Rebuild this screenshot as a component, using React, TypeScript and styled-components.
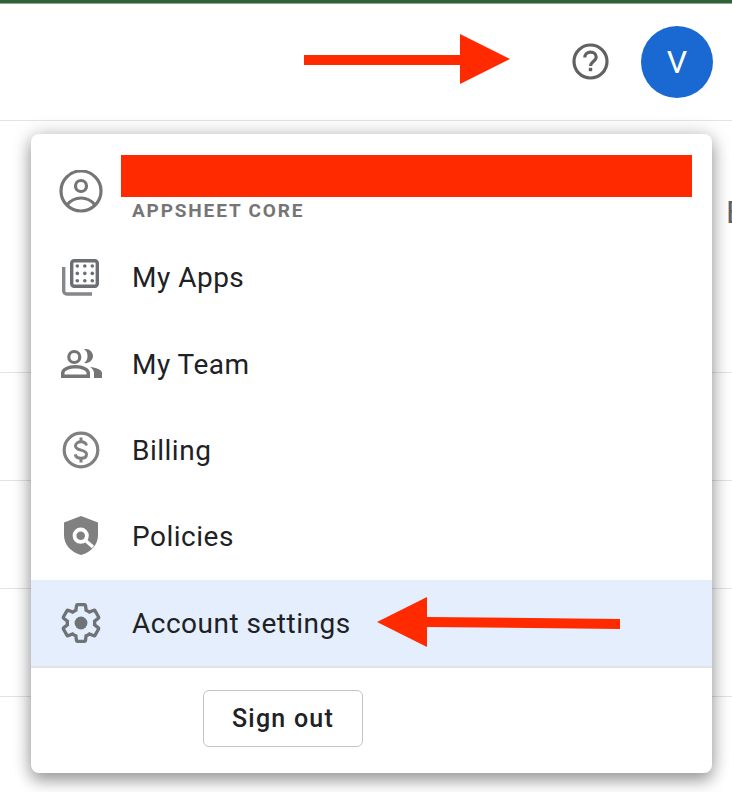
import React from "react";
import styled, { createGlobalStyle } from "styled-components";

const GlobalStyle = createGlobalStyle`
  html, body {
    margin: 0;
    padding: 0;
    background: #fff;
    overflow: hidden;
  }
  body {
    font-family: Roboto, "Liberation Sans", sans-serif;
  }
`;

const Page = styled.div`
  position: relative;
  width: 732px;
  height: 792px;
  overflow: hidden;
  background: #fff;
`;

const TopStrip = styled.div`
  height: 4px;
  background: #2f6236;
  border-bottom: 1px solid #8fa893;
  box-sizing: border-box;
`;

const TopBar = styled.header`
  height: 117px;
  box-sizing: border-box;
  display: flex;
  align-items: center;
  justify-content: flex-end;
  gap: 32px;
  padding-right: 19px;
  border-bottom: 1px solid #e3e3e3;
`;

const HelpButton = styled.div`
  width: 37px;
  height: 37px;
  margin-bottom: 2px;
  display: flex;
  align-items: center;
  justify-content: center;
`;

const Avatar = styled.div`
  width: 72px;
  height: 72px;
  border-radius: 50%;
  background: #1a69d3;
  color: #fff;
  font-size: 32px;
  display: flex;
  align-items: center;
  justify-content: center;
`;

const Rows = styled.div`
  padding-top: 144px;
  display: flex;
  flex-direction: column;
`;

const BgRow = styled.div`
  height: 108px;
  box-sizing: border-box;
  border-bottom: 1px solid #e3e3e3;
`;

const ClippedLetter = styled.span`
  position: absolute;
  left: 726px;
  top: 196px;
  font-size: 32px;
  line-height: 32px;
  color: #5f6368;
`;

const Menu = styled.div`
  position: absolute;
  left: 31px;
  top: 134px;
  width: 681px;
  height: 639px;
  background: #fff;
  border-radius: 8px;
  box-shadow: 0 8px 16px rgba(0, 0, 0, 0.32), 0 0 20px rgba(0, 0, 0, 0.2);
  overflow: hidden;
  display: flex;
  flex-direction: column;
`;

const AccountHeader = styled.div`
  height: 100px;
  box-sizing: border-box;
  display: flex;
  padding: 21px 20px 0 90px;
  flex-direction: column;
  position: relative;
`;

const Redaction = styled.div`
  width: 571px;
  height: 42px;
  background: #ff2a00;
`;

const Plan = styled.div`
  margin: 5px 0 0 11px;
  font-size: 19px;
  line-height: 18px;
  font-weight: 700;
  letter-spacing: 1.85px;
  color: #757575;
`;

const HeaderIcon = styled.div`
  position: absolute;
  left: 28px;
  top: 36px;
  display: flex;
`;

const MenuList = styled.div`
  display: flex;
  flex-direction: column;
`;

const MenuItem = styled.div<{ $active?: boolean }>`
  height: 86.4px;
  box-sizing: border-box;
  display: flex;
  align-items: center;
  padding-left: 28px;
  gap: 29px;
  font-size: 28px;
  letter-spacing: 0.5px;
  color: #202124;
  background: ${(p) => (p.$active ? "#e4eefc" : "transparent")};
`;

const ItemIcon = styled.div`
  width: 44px;
  height: 44px;
  display: flex;
  align-items: center;
  justify-content: center;
  flex-shrink: 0;
`;

const ItemLabel = styled.span`
  margin-top: 1px;
`;

const Footer = styled.div`
  border-top: 2px solid #dfe3e8;
  padding: 22px 0 0 172px;
`;

const SignOut = styled.button`
  width: 160px;
  height: 57px;
  background: #fff;
  border: 1px solid #c4c4c4;
  border-radius: 6px;
  font-family: Roboto, "Liberation Sans", sans-serif;
  font-size: 25px;
  font-weight: 500;
  letter-spacing: 1.25px;
  color: #202124;
  padding: 0;
`;

const Annotation = styled.svg`
  position: absolute;
  left: 0;
  top: 0;
  pointer-events: none;
`;

const ICON = "#757575";

function PersonCircleIcon() {
  return (
    <svg width="44" height="44" viewBox="0 0 44 44" fill="none" stroke={ICON} strokeWidth="3.2">
      <circle cx="22" cy="21" r="20" />
      <circle cx="22" cy="16" r="5.500" />
      <path d="M8 35c4-5 9-7 14-7s10 2 14 7" />
    </svg>
  );
}

function AppsIcon() {
  const dots: React.ReactNode[] = [];
  [0, 1, 2].forEach((r) =>
    [0, 1, 2].forEach((c) =>
      dots.push(<circle key={`${r}-${c}`} cx={18.3 + c * 7.5} cy={11 + r * 7.4} r="1.8" fill="#6b6e72" />)
    )
  );
  return (
    <svg width="44" height="44" viewBox="0 0 44 44" fill="none">
      <rect x="12.700" y="5.700" width="25.600" height="25.600" rx="2.500" stroke="#6b6e72" strokeWidth="3.400" />
      <path d="M4.700 12v24a3 3 0 0 0 3 3H33" stroke="#85878b" strokeWidth="3.400" />
      {dots}
    </svg>
  );
}

function TeamIcon() {
  return (
    <svg width="44" height="44" viewBox="0 0 44 44">
      <circle cx="15.300" cy="15" r="5.500" fill="none" stroke={ICON} strokeWidth="3.200" />
      <path d="M25 7.200C30 6 34 10 34 14c0 4-4 8-9 7 2.500-1.500 3.500-4 3.500-7S27.500 8.500 25 7.200z" fill={ICON} />
      <path
        d="M2 36v-5c0-5 7-8 14.500-8S31 26 31 31v5H2zm3.500-3.500h22v-1.500c0-2.500-5.500-4.500-11-4.500s-11 2-11 4.500v1.500z"
        fill={ICON}
        fillRule="evenodd"
      />
      <path d="M31 25c6 .5 12 2.500 12 6v5h-8v-5c0-2.500-1.500-4.500-4-6z" fill={ICON} />
    </svg>
  );
}

function BillingIcon() {
  return (
    <svg width="44" height="44" viewBox="0 0 44 44" fill="none">
      <circle cx="22" cy="22" r="16.800" stroke="#808080" strokeWidth="3.200" />
      <path
        d="M27.500 17.500c-.5-2.400-2.700-3.700-5.500-3.700-3 0-5.500 1.500-5.500 4.200 0 5.500 11 2.800 11 8.200 0 2.700-2.500 4-5.500 4s-5.300-1.400-5.800-3.800"
        stroke="#808080"
        strokeWidth="3"
      />
      <path d="M22 9.500v4.500M22 30v4.500" stroke="#808080" strokeWidth="3" />
    </svg>
  );
}

function PolicyIcon() {
  return (
    <svg width="44" height="44" viewBox="0 0 44 44">
      <path d="M22 2 39 8.500V21c0 9.500-6.500 17-17 20C11.500 38 5 30.500 5 21V8.500L22 2z" fill="#808080" />
      <circle cx="21.700" cy="21.700" r="6.200" fill="none" stroke="#fff" strokeWidth="3.800" />
      <path d="M26.500 26.500 34 33" stroke="#fff" strokeWidth="3.400" />
    </svg>
  );
}

function GearIcon() {
  return (
    <svg width="44" height="44" viewBox="0 0 24 24" fill="none">
      <path
        d="M19.400 13c.04-.33.06-.66.06-1s-.02-.67-.06-1l2.100-1.650a.5.5 0 0 0 .12-.64l-2-3.460a.5.500 0 0 0-.6-.22l-2.480 1a7.300 7.300 0 0 0-1.730-1l-.38-2.650A.5.500 0 0 0 13.930 2H10.070a.5.500 0 0 0-.49.42L9.200 5.070a7.600 7.600 0 0 0-1.730 1l-2.480-1a.5.500 0 0 0-.6.220l-2 3.460a.5.500 0 0 0 .12.640L4.600 11c-.04.33-.06.67-.06 1s.02.67.06 1l-2.100 1.650a.5.500 0 0 0-.12.640l2 3.460c.12.22.39.3.6.22l2.480-1c.53.4 1.100.74 1.730 1l.38 2.650c.04.24.25.42.49.42h3.860c.24 0 .45-.18.49-.42l.38-2.650a7.300 7.300 0 0 0 1.730-1l2.480 1c.22.08.48 0 .6-.22l2-3.460a.5.500 0 0 0-.12-.64L19.400 13z"
        stroke="#6f7276"
        strokeWidth="1.800"
      />
      <circle cx="12" cy="12" r="3.500" fill="#6f7276" />
    </svg>
  );
}

function HelpIcon() {
  return (
    <svg width="37" height="37" viewBox="0 0 37 37" fill="none">
      <circle cx="18.500" cy="18.500" r="16.500" stroke="#616161" strokeWidth="3.200" />
      <path
        d="M12.800 14.500c0-3.200 2.500-5.300 5.700-5.300s5.700 2 5.700 5c0 3.800-5.700 4.300-5.700 8.800"
        stroke="#616161"
        strokeWidth="3.200"
      />
      <rect x="16.800" y="24.800" width="3.400" height="3.400" fill="#616161" />
    </svg>
  );
}

const items = [
  { label: "My Apps", icon: <AppsIcon /> },
  { label: "My Team", icon: <TeamIcon /> },
  { label: "Billing", icon: <BillingIcon /> },
  { label: "Policies", icon: <PolicyIcon /> },
  { label: "Account settings", icon: <GearIcon />, active: true },
];

export default function App() {
  return (
    <Page>
      <GlobalStyle />
      <TopStrip />
      <TopBar>
        <HelpButton>
          <HelpIcon />
        </HelpButton>
        <Avatar>V</Avatar>
      </TopBar>
      <Rows>
        <BgRow />
        <BgRow />
        <BgRow />
        <BgRow />
      </Rows>
      <ClippedLetter>E</ClippedLetter>
      <Menu>
        <AccountHeader>
          <HeaderIcon>
            <PersonCircleIcon />
          </HeaderIcon>
          <Redaction />
          <Plan>APPSHEET CORE</Plan>
        </AccountHeader>
        <MenuList>
          {items.map((item) => (
            <MenuItem key={item.label} $active={item.active}>
              <ItemIcon>{item.icon}</ItemIcon>
              <ItemLabel>{item.label}</ItemLabel>
            </MenuItem>
          ))}
        </MenuList>
        <Footer>
          <SignOut>Sign out</SignOut>
        </Footer>
      </Menu>
      <Annotation width="732" height="792" viewBox="0 0 732 792">
        <path d="M304 55h156V34l50 25-50 25V65H304z" fill="#ff2a00" />
        <path d="M620 619v10l-193-2v20l-50-25 50-25v20z" fill="#ff2a00" />
      </Annotation>
    </Page>
  );
}
